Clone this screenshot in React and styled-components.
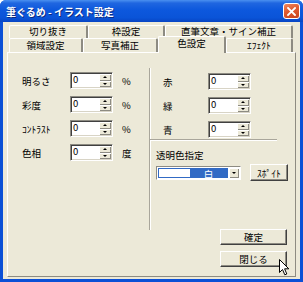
import React from "react";
import styled, { createGlobalStyle } from "styled-components";

const GlobalStyle = createGlobalStyle`
  html, body {
    margin: 0;
    padding: 0;
    background: #ffffff;
  }
  body {
    font-family: "Noto Sans CJK JP", "Noto Sans", sans-serif;
    font-size: 9.5px;
    color: #000;
  }
`;

const Window = styled.div`
  position: relative;
  width: 303px;
  height: 282px;
  box-sizing: border-box;
  display: flex;
  flex-direction: column;
  background: #0b50d6;
  border-radius: 6px 6px 0 0;
  overflow: hidden;
`;

const TitleBar = styled.div`
  height: 22px;
  flex-shrink: 0;
  display: flex;
  align-items: center;
  justify-content: space-between;
  padding: 0 3px 0 6px;
  background: linear-gradient(
    180deg,
    #4a90f0 0%,
    #1f66e0 14%,
    #0d58dd 45%,
    #0a54d8 80%,
    #0845c4 100%
  );
`;

const Title = styled.div`
  color: #fff;
  font-weight: 700;
  font-size: 10px;
  text-shadow: 1px 1px 0 #0b2a80;
`;

const CloseButton = styled.div`
  width: 15px;
  height: 14px;
  border: 1px solid #fff;
  border-radius: 3px;
  display: flex;
  align-items: center;
  justify-content: center;
  background: linear-gradient(160deg, #f0875e 0%, #e05a2f 45%, #c8441c 100%);
`;

const Client = styled.div`
  flex: 1;
  margin: 0 3px 3px;
  background: #ece9d8;
  padding: 3px 4px 2px;
  display: flex;
  flex-direction: column;
`;

const TabRow = styled.div`
  display: flex;
  align-items: flex-start;
  padding-left: 2px;
  height: ${(p) => p.$h}px;
`;

const Tab = styled.div`
  position: relative;
  box-sizing: border-box;
  width: ${(p) => p.$w}px;
  height: ${(p) => (p.$active ? 17 : p.$h)}px;
  margin-top: ${(p) => (p.$active ? -2 : 0)}px;
  z-index: ${(p) => (p.$active ? 2 : 1)};
  background: #ece9d8;
  border-top: 1px solid #ffffff;
  border-left: 1px solid #ffffff;
  border-right: 2px solid #8d8b82;
  border-radius: 2px 2px 0 0;
  text-align: center;
  line-height: ${(p) => p.$h - 2}px;
  font-size: 9.5px;
  white-space: nowrap;
`;

const Panel = styled.div`
  flex: 1;
  display: flex;
  flex-direction: column;
  border-top: 1px solid #ffffff;
  border-left: 1px solid #ffffff;
  border-right: 1px solid #8d8b82;
  border-bottom: 1px solid #8d8b82;
`;

const Main = styled.div`
  display: flex;
  margin-top: 15px;
`;

const LeftCol = styled.div`
  width: 141px;
  padding: 4px 0 0 14px;
  box-sizing: border-box;
  display: flex;
  flex-direction: column;
  gap: 7px;
`;

const RightGroup = styled.div`
  flex: 1;
  height: 162px;
  box-sizing: border-box;
  border-left: 1px solid #a9a69b;
  box-shadow: inset 1px 0 0 #ffffff;
  padding-top: 5px;
  display: flex;
  flex-direction: column;
`;

const RgbList = styled.div`
  display: flex;
  flex-direction: column;
  gap: 7px;
`;

const FieldRow = styled.div`
  display: flex;
  align-items: center;
  height: 17px;
  padding-left: ${(p) => p.$indent || 0}px;
`;

const Label = styled.div`
  width: ${(p) => p.$w}px;
  white-space: nowrap;
`;

const Unit = styled.div`
  margin-left: 9px;
`;

const SpinBox = styled.div`
  width: 43px;
  height: 17px;
  box-sizing: border-box;
  display: flex;
  background: #fff;
  border-top: 1px solid #8d8b82;
  border-left: 1px solid #8d8b82;
  border-right: 1px solid #ffffff;
  border-bottom: 1px solid #ffffff;
  box-shadow: inset 1px 1px 0 #404040, inset -1px -1px 0 #d8d4c6;
`;

const SpinValue = styled.div`
  flex: 1;
  padding: 1px 0 0 2px;
  line-height: 11px;
`;

const SpinButtons = styled.div`
  width: 12px;
  display: flex;
  flex-direction: column;
  padding: 1px 1px 1px 0;
`;

const SpinHalf = styled.div`
  flex: 1;
  background: #ece9d8;
  box-shadow: inset 1px 1px 0 #ffffff, inset -1px -1px 0 #8d8b82;
  display: flex;
  align-items: center;
  justify-content: center;
`;

const Arrow = styled.div`
  width: 0;
  height: 0;
  border-left: 2px solid transparent;
  border-right: 2px solid transparent;
  ${(p) =>
    p.$up
      ? "border-bottom: 2px solid #000;"
      : "border-top: 2px solid #000;"}
`;

const Separator = styled.div`
  margin: 1px 18px 0 0;
  height: 1px;
  background: #a9a69b;
  border-bottom: 1px solid #ffffff;
`;

const SubTitle = styled.div`
  margin: 8px 0 0 6px;
  height: 12px;
  line-height: 12px;
`;

const ComboRow = styled.div`
  display: flex;
  align-items: center;
  margin: 3px 0 0 6px;
  gap: 9px;
`;

const Combo = styled.div`
  width: 85px;
  height: 14px;
  box-sizing: border-box;
  display: flex;
  background: #fff;
  border-top: 1px solid #8d8b82;
  border-left: 1px solid #8d8b82;
  border-right: 1px solid #ffffff;
  border-bottom: 1px solid #ffffff;
  padding: 1px;
  gap: 1px;
`;

const ComboSelection = styled.div`
  flex: 1;
  display: flex;
  background: #316ac5;
  padding: 1px;
`;

const Swatch = styled.div`
  width: 31px;
  background: ${(p) => p.$color};
`;

const ComboText = styled.div`
  flex: 1;
  color: #fff;
  text-align: center;
  line-height: 10px;
`;

const ComboDrop = styled.div`
  width: 10px;
  background: #ece9d8;
  box-shadow: inset 1px 1px 0 #ffffff, inset -1px -1px 0 #8d8b82;
  display: flex;
  align-items: center;
  justify-content: center;
`;

const Button = styled.div`
  width: ${(p) => p.$w}px;
  height: ${(p) => p.$h}px;
  box-sizing: border-box;
  display: flex;
  align-items: center;
  justify-content: center;
  background: #ece9d8;
  border-top: 1px solid #ffffff;
  border-left: 1px solid #ffffff;
  border-right: 1px solid #404040;
  border-bottom: 1px solid #404040;
  box-shadow: inset -1px -1px 0 #8d8b82;
  white-space: nowrap;
`;

const Buttons = styled.div`
  align-self: flex-end;
  margin: -1px 8px 0 0;
  display: flex;
  flex-direction: column;
  gap: 6px;
`;

const Cursor = styled.svg`
  position: absolute;
  left: 279px;
  top: 259px;
`;

function Spin({ value }) {
  return (
    <SpinBox>
      <SpinValue>{value}</SpinValue>
      <SpinButtons>
        <SpinHalf>
          <Arrow $up />
        </SpinHalf>
        <SpinHalf>
          <Arrow />
        </SpinHalf>
      </SpinButtons>
    </SpinBox>
  );
}

const leftRows = [
  { label: "明るさ", unit: "%" },
  { label: "彩度", unit: "%" },
  { label: "ｺﾝﾄﾗｽﾄ", unit: "%" },
  { label: "色相", unit: "度" },
];

const rgbRows = ["赤", "緑", "青"];

const backTabs = [
  { text: "切り抜き", w: 79 },
  { text: "枠設定", w: 77 },
  { text: "直筆文章・サイン補正", w: 128 },
];

const frontTabs = [
  { text: "領域設定", w: 74 },
  { text: "写真補正", w: 75 },
  { text: "色設定", w: 68, active: true },
  { text: "ｴﾌｪｸﾄ", w: 67 },
];

export default function App() {
  return (
    <>
      <GlobalStyle />
      <Window>
        <TitleBar>
          <Title>筆ぐるめ - イラスト設定</Title>
          <CloseButton>
            <svg width="9" height="9" viewBox="0 0 9 9">
              <path
                d="M1 1 L8 8 M8 1 L1 8"
                stroke="#fff"
                strokeWidth="1.8"
                strokeLinecap="square"
              />
            </svg>
          </CloseButton>
        </TitleBar>
        <Client>
          <TabRow $h={13}>
            {backTabs.map((t) => (
              <Tab key={t.text} $w={t.w} $h={13}>
                {t.text}
              </Tab>
            ))}
          </TabRow>
          <TabRow $h={14}>
            {frontTabs.map((t) => (
              <Tab key={t.text} $w={t.w} $h={14} $active={t.active}>
                {t.text}
              </Tab>
            ))}
          </TabRow>
          <Panel>
            <Main>
              <LeftCol>
                {leftRows.map((r) => (
                  <FieldRow key={r.label}>
                    <Label $w={48}>{r.label}</Label>
                    <Spin value="0" />
                    <Unit>{r.unit}</Unit>
                  </FieldRow>
                ))}
              </LeftCol>
              <RightGroup>
                <RgbList>
                  {rgbRows.map((r) => (
                    <FieldRow key={r} $indent={13}>
                      <Label $w={45}>{r}</Label>
                      <Spin value="0" />
                    </FieldRow>
                  ))}
                </RgbList>
                <Separator />
                <SubTitle>透明色指定</SubTitle>
                <ComboRow>
                  <Combo>
                    <ComboSelection>
                      <Swatch $color="#ffffff" />
                      <ComboText>白</ComboText>
                    </ComboSelection>
                    <ComboDrop>
                      <Arrow />
                    </ComboDrop>
                  </Combo>
                  <Button $w={38} $h={17}>
                    ｽﾎﾟｲﾄ
                  </Button>
                </ComboRow>
              </RightGroup>
            </Main>
            <Buttons>
              <Button $w={67} $h={16}>
                確定
              </Button>
              <Button $w={67} $h={16}>
                閉じる
              </Button>
            </Buttons>
          </Panel>
        </Client>
        <Cursor width="11" height="17" viewBox="0 0 11 17">
          <path
            d="M0.5 0.5 L0.5 13.5 L3.5 10.5 L5.8 15.8 L7.8 15 L5.6 9.8 L9.8 9.8 Z"
            fill="#fff"
            stroke="#000"
            strokeWidth="1"
          />
        </Cursor>
      </Window>
    </>
  );
}
